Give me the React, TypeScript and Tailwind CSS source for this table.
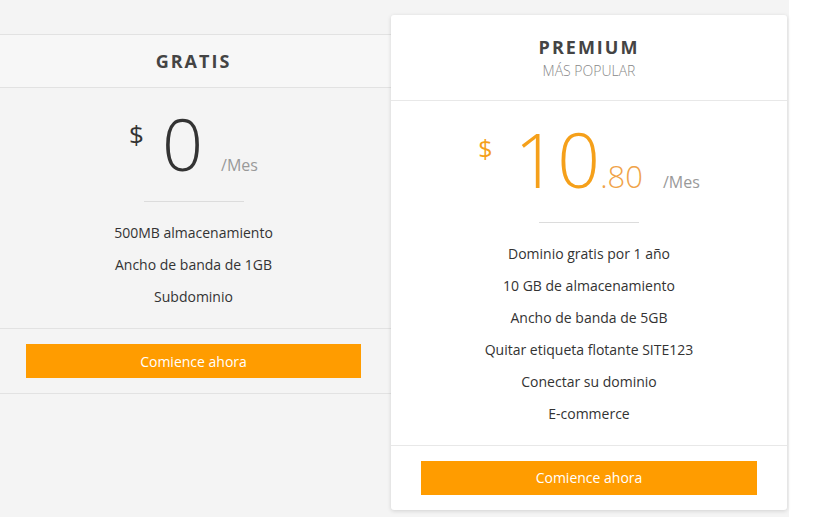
import React from "react";

interface Plan {
  name: string;
  subtitle?: string;
  whole: string;
  cents?: string;
  features: string[];
}

const gratis: Plan = {
  name: "GRATIS",
  whole: "0",
  features: ["500MB almacenamiento", "Ancho de banda de 1GB", "Subdominio"],
};

const premium: Plan = {
  name: "PREMIUM",
  subtitle: "MÁS POPULAR",
  whole: "10",
  cents: ".80",
  features: [
    "Dominio gratis por 1 año",
    "10 GB de almacenamiento",
    "Ancho de banda de 5GB",
    "Quitar etiqueta flotante SITE123",
    "Conectar su dominio",
    "E-commerce",
  ],
};

const FeatureList: React.FC<{ items: string[] }> = ({ items }) => (
  <ul className="text-[14px] leading-[32px] text-[#333]">
    {items.map((f) => (
      <li key={f}>{f}</li>
    ))}
  </ul>
);

const StartButton: React.FC = () => (
  <button className="w-full h-[34px] bg-[#ff9c00] text-white text-[14px]">
    Comience ahora
  </button>
);

const App: React.FC = () => {
  return (
    <div
      className="flex w-[819px] h-[517px] overflow-hidden bg-white"
      style={{ fontFamily: "'Open Sans', sans-serif" }}
    >
      <div className="w-[789px] shrink-0 bg-[#f4f4f4] flex items-start">
        {/* Gratis */}
        <div className="-ml-1 mt-[34px] w-[395px] shrink-0 border-y border-[#e2e2e2] text-center">
          <div className="h-[53px] bg-[#f7f7f7] border-b border-[#e2e2e2] flex items-center justify-center">
            <h3 className="text-[18px] font-bold tracking-[2px] text-[#444]">
              {gratis.name}
            </h3>
          </div>
          <div className="pt-[19px] px-[30px]">
            <div className="flex justify-center items-baseline">
              <span className="self-start mt-[14px] text-[26px] leading-none text-[#333]">
                $
              </span>
              <span className="ml-[18px] text-[72px] leading-none font-light text-[#333]">
                {gratis.whole}
              </span>
              <span className="ml-[18px] text-[16px] text-[#999]">/Mes</span>
            </div>
            <div className="mx-auto mt-[22px] w-[100px] h-px bg-[#dcdcdc]" />
            <div className="mt-[15px] pb-[15px]">
              <FeatureList items={gratis.features} />
            </div>
          </div>
          <div className="border-t border-[#e2e2e2] px-[30px] py-[15px]">
            <StartButton />
          </div>
        </div>

        {/* Premium */}
        <div className="mt-[15px] w-[396px] shrink-0 bg-white rounded-[3px] shadow-[0_1px_4px_rgba(0,0,0,0.14)] text-center">
          <div className="h-[86px] border-b border-[#e8e8e8] flex flex-col items-center justify-center">
            <h3 className="text-[18px] font-bold tracking-[2px] text-[#444] leading-[24px]">
              {premium.name}
            </h3>
            <p className="mt-[2px] text-[14px] font-light text-[#888] leading-[20px]">
              {premium.subtitle}
            </p>
          </div>
          <div className="pt-[21px] px-[30px]">
            <div className="flex justify-center items-baseline text-[#f5a01a]">
              <span className="self-start mt-[14px] text-[25px] leading-none">$</span>
              <span className="ml-[22px] text-[75px] leading-none font-light">
                {premium.whole}
              </span>
              <span className="text-[31px] font-light text-[#f0a349]">
                {premium.cents}
              </span>
              <span className="ml-[20px] text-[16px] text-[#999]">/Mes</span>
            </div>
            <div className="mx-auto mt-[22px] w-[100px] h-px bg-[#dcdcdc]" />
            <div className="mt-[15px] pb-[15px]">
              <FeatureList items={premium.features} />
            </div>
          </div>
          <div className="border-t border-[#e8e8e8] px-[30px] py-[15px]">
            <StartButton />
          </div>
        </div>
      </div>
    </div>
  );
};

export default App;
